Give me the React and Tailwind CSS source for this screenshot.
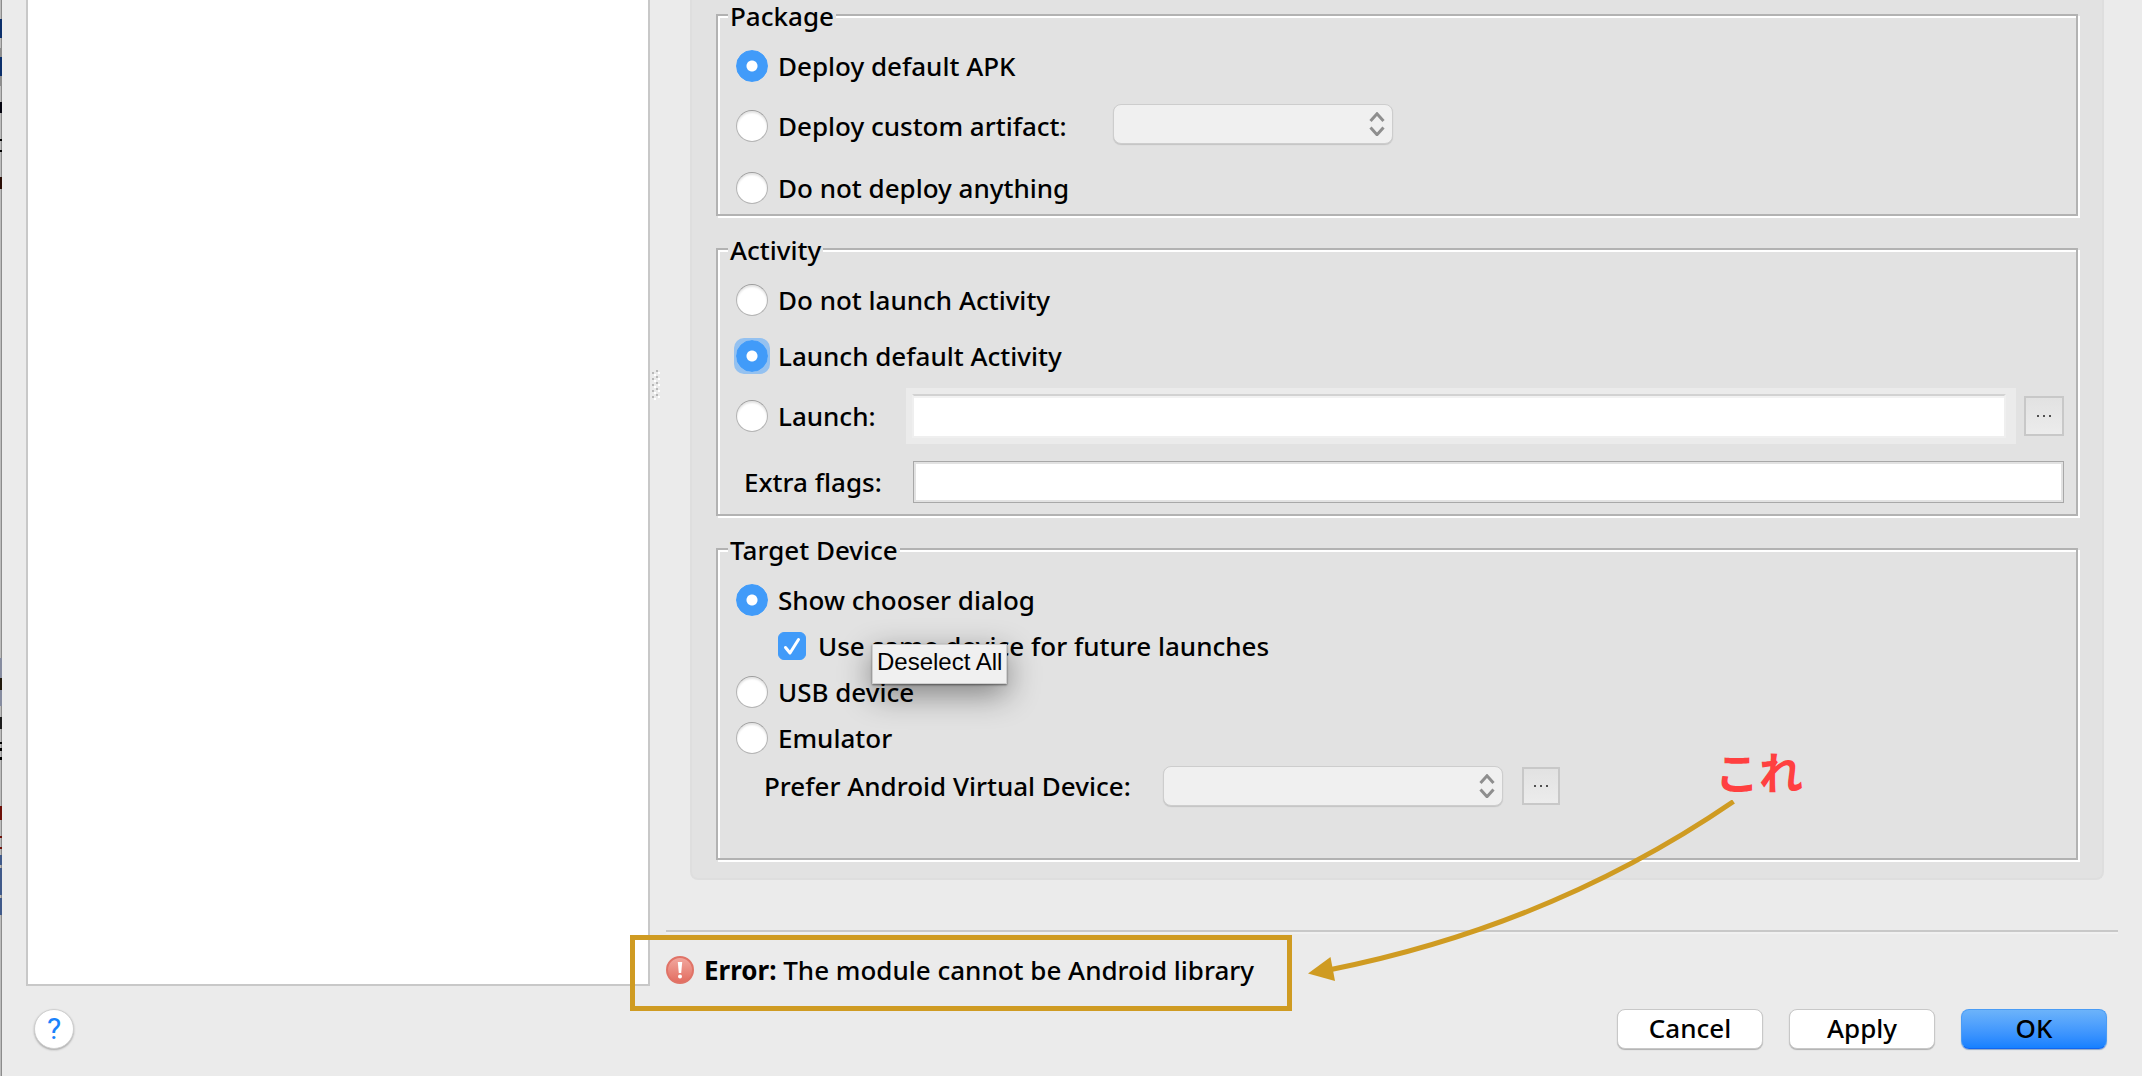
import { useState } from "react";

// slivers of the editor window that show behind the dialog
const editorSlivers = [
  { gap: 19, height: 19, color: "#0b2f6b" },
  { gap: 10, height: 9, color: "#8e8e8e" },
  { gap: 0, height: 19, color: "#0b2f6b" },
  { gap: 0, height: 10, color: "#8e8e8e" },
  { gap: 16, height: 11, color: "#050510" },
  { gap: 26, height: 2, color: "#000000" },
  { gap: 9, height: 2, color: "#000000" },
  { gap: 25, height: 12, color: "#2a0d05" },
  { gap: 469, height: 20, color: "#868ca0" },
  { gap: 0, height: 12, color: "#22190c" },
  { gap: 0, height: 16, color: "#868ca0" },
  { gap: 11, height: 12, color: "#1c1c1c" },
  { gap: 13, height: 2, color: "#000000" },
  { gap: 4, height: 3, color: "#000000" },
  { gap: 6, height: 3, color: "#000000" },
  { gap: 46, height: 14, color: "#6e1008" },
  { gap: 16, height: 2, color: "#6e1008" },
  { gap: 9, height: 2, color: "#6e1008" },
  { gap: 6, height: 10, color: "#405a8a" },
  { gap: 3, height: 27, color: "#405a8a" },
  { gap: 3, height: 17, color: "#405a8a" },
];

const EditorEdge = () => (
  <div className="flex w-0.5 shrink-0 flex-col bg-linear-to-r from-[#bcbcbc] from-50% to-[#8c8c8c] to-50%">
    {editorSlivers.map((s, i) => (
      <div
        key={i}
        style={{ marginTop: s.gap, height: s.height, background: s.color }}
      />
    ))}
  </div>
);

const Group = ({ title, children }) => (
  <fieldset className="border-2 border-[#b2b2b2] px-2.5 shadow-[2px_2px_0_#fff,inset_2px_2px_0_#fff]">
    <legend className="bg-[#e2e2e2] px-0.5 pt-0.5 leading-7">{title}</legend>
    {children}
  </fieldset>
);

const Radio = ({ name, value, selected, onSelect, focused, children }) => (
  <label className="flex h-8 items-center gap-2.5 whitespace-nowrap">
    <span
      className={
        focused ? "-m-0.5 rounded-[10px] bg-[#94c1f0] p-0.5" : "rounded-full"
      }
    >
      <input
        type="radio"
        name={name}
        value={value}
        checked={selected === value}
        onChange={() => onSelect(value)}
        className="block h-8 w-8 shrink-0 appearance-none rounded-full border border-[#b4b4b4] border-t-[#9c9c9c] bg-white shadow-[inset_0_2px_2px_#e4e4e4] outline-none checked:border-[#419bf9] checked:bg-[radial-gradient(circle,#fff_5px,#419bf9_6px)] checked:shadow-none"
      />
    </span>
    {children}
  </label>
);

const Combo = ({ label, className }) => (
  <div className={`relative h-10 ${className}`}>
    <select
      aria-label={label}
      disabled
      className="h-10 w-full appearance-none rounded-lg border border-[#cdcdcd] bg-[#f0f0f0] shadow-[0_1px_1px_#c4c4c4]"
    />
    <svg
      className="pointer-events-none absolute top-2 right-2 h-6 w-4"
      viewBox="0 0 16 24"
      fill="none"
      stroke="#8e8e8e"
      strokeWidth="3"
    >
      <path d="M1.5 9 8 1.8 14.5 9M1.5 15.5 8 22.7l6.5-7.2" />
    </svg>
  </div>
);

const MoreButton = ({ label, className }) => (
  <button
    type="button"
    aria-label={label}
    className={`flex shrink-0 items-center justify-center gap-1 border-2 border-[#c8c8c8] bg-linear-to-b from-[#e2e2e2] to-[#ececec] ${className}`}
  >
    <span className="h-0.5 w-0.5 bg-[#505050]" />
    <span className="h-0.5 w-0.5 bg-[#505050]" />
    <span className="h-0.5 w-0.5 bg-[#505050]" />
  </button>
);

const App = () => {
  const [deploy, setDeploy] = useState("default");
  const [activity, setActivity] = useState("default");
  const [target, setTarget] = useState("chooser");
  const [sameDevice, setSameDevice] = useState(true);

  return (
    <div className="flex min-h-screen overflow-hidden bg-[#ebebeb] font-['Noto_Sans','Open_Sans',sans-serif] text-[26px] font-medium text-black">
      <EditorEdge />

      <div className="flex min-w-0 flex-1 flex-col">
        <div className="flex flex-1 pl-6">
          {/* Configuration tree */}
          <div className="w-[624px] shrink-0 border-2 border-t-0 border-[#c8c8c8] bg-white" />

          {/* Splitter grip */}
          <div className="w-4 shrink-0 pt-[368px] pl-0.5">
            <svg className="h-8 w-2" viewBox="0 0 8 32">
              {[0, 6, 12, 18, 24].map((y) => (
                <g key={y}>
                  <path d={`M4 ${y + 2}h2v2h-2zM0 ${y + 4}h2v2h-2z`} fill="#b8b8b8" />
                  <path d={`M6 ${y + 4}h2v2h-2zM2 ${y + 6}h2v2h-2z`} fill="#fff" />
                </g>
              ))}
            </svg>
          </div>

          <main className="flex min-w-0 flex-1 flex-col">
            <div className="mr-[38px] ml-6 flex flex-col gap-[18px] rounded-b-lg border-2 border-t-0 border-[#dedede] bg-[#e2e2e2] px-6 pb-[18px]">
              <Group title="Package">
                <div className="px-2 pt-5 pb-2.5">
                  <Radio name="deploy" value="default" selected={deploy} onSelect={setDeploy}>
                    Deploy default APK
                  </Radio>
                  <div className="mt-[22px] mb-7 flex h-10 items-center">
                    <div className="w-[377px] pt-1">
                      <Radio name="deploy" value="custom" selected={deploy} onSelect={setDeploy}>
                        Deploy custom artifact:
                      </Radio>
                    </div>
                    <Combo label="Custom artifact" className="w-[280px]" />
                  </div>
                  <Radio name="deploy" value="nothing" selected={deploy} onSelect={setDeploy}>
                    Do not deploy anything
                  </Radio>
                </div>
              </Group>

              <Group title="Activity">
                <div className="pt-5 pr-0.5 pb-[11px] pl-2">
                  <Radio name="activity" value="none" selected={activity} onSelect={setActivity}>
                    Do not launch Activity
                  </Radio>
                  <div className="mt-6 mb-4">
                    <Radio
                      name="activity"
                      value="default"
                      selected={activity}
                      onSelect={setActivity}
                      focused
                    >
                      Launch default Activity
                    </Radio>
                  </div>
                  <div className="flex items-center gap-2">
                    <div className="w-[162px]">
                      <Radio name="activity" value="custom" selected={activity} onSelect={setActivity}>
                        Launch:
                      </Radio>
                    </div>
                    <div className="flex flex-1 bg-[#ebebeb] py-1.5 pr-2.5 pl-1.5">
                      <input
                        type="text"
                        aria-label="Activity to launch"
                        className="h-11 w-full border-2 border-[#efefef] border-t-[#d2d2d2] bg-white px-2 shadow-[inset_0_2px_0_#f2f2f2] outline-none"
                      />
                    </div>
                    <MoreButton label="Choose activity" className="h-10 w-10" />
                  </div>
                  <div className="mt-[17px] flex items-center">
                    <label htmlFor="flags" className="w-[177px] pl-2">
                      Extra flags:
                    </label>
                    <input
                      id="flags"
                      type="text"
                      className="h-[42px] min-w-0 flex-1 border border-[#a8a8a8] bg-white px-2 shadow-[inset_0_0_0_2px_#e2e2e2] outline-none"
                    />
                  </div>
                </div>
              </Group>

              <Group title="Target Device">
                <div className="px-2 pt-5 pb-[52px]">
                  <Radio name="target" value="chooser" selected={target} onSelect={setTarget}>
                    Show chooser dialog
                  </Radio>
                  <div className="relative mt-4 mb-4 ml-[42px] w-fit">
                    <label className="flex h-7 items-center gap-3 whitespace-nowrap">
                      <span className="grid h-7 w-7 shrink-0">
                        <input
                          type="checkbox"
                          checked={sameDevice}
                          onChange={(e) => setSameDevice(e.target.checked)}
                          className="col-start-1 row-start-1 h-7 w-7 appearance-none rounded-md border border-[#b4b4b4] bg-white checked:border-[#419bf9] checked:bg-[#419bf9]"
                        />
                        {sameDevice && (
                          <svg
                            className="pointer-events-none col-start-1 row-start-1 h-7 w-7"
                            viewBox="0 0 28 28"
                            fill="none"
                            stroke="#fff"
                            strokeWidth="3"
                            strokeLinecap="round"
                            strokeLinejoin="round"
                          >
                            <path d="M7.5 15.5l4.5 5.5L20.5 7.5" />
                          </svg>
                        )}
                      </span>
                      Use same device for future launches
                    </label>
                    <div
                      role="tooltip"
                      className="absolute top-3 left-[94px] h-10 border border-[#d0d0d0] bg-[#f0f0f0] px-1 font-['Liberation_Sans',sans-serif] text-2xl leading-[34px] font-normal whitespace-nowrap shadow-[0_1px_2px_#00000080,0_10px_32px_#00000070]"
                    >
                      Deselect All
                    </div>
                  </div>
                  <div className="flex flex-col gap-3.5">
                    <Radio name="target" value="usb" selected={target} onSelect={setTarget}>
                      USB device
                    </Radio>
                    <Radio name="target" value="emulator" selected={target} onSelect={setTarget}>
                      Emulator
                    </Radio>
                  </div>
                  <div className="mt-3 flex h-10 items-center">
                    <div className="w-[427px] pl-7 whitespace-nowrap">
                      Prefer Android Virtual Device:
                    </div>
                    <Combo label="Prefer Android Virtual Device" className="mr-[19px] w-[340px]" />
                    <MoreButton label="Choose virtual device" className="h-[38px] w-[38px]" />
                  </div>
                </div>
              </Group>
            </div>

            {/* Validation message */}
            <div className="relative mt-[50px] mr-6 border-t-2 border-[#c8c8c8] shadow-[inset_0_2px_0_#f0f0f0]">
              <p className="flex items-center gap-2.5 pt-6 pb-0.5 leading-7 whitespace-nowrap">
                <svg className="h-7 w-7 shrink-0" viewBox="0 0 28 28">
                  <defs>
                    <linearGradient id="err" x1="0" y1="0" x2="0" y2="1">
                      <stop offset="0" stopColor="#f2a9a0" />
                      <stop offset="1" stopColor="#e26b5e" />
                    </linearGradient>
                  </defs>
                  <circle cx="14" cy="14" r="13" fill="url(#err)" stroke="#e07367" strokeWidth="2" />
                  <path d="M11.8 6h4.4l-1 11h-2.4z" fill="#fff" />
                  <circle cx="14" cy="20.5" r="2" fill="#fff" />
                </svg>
                <span>
                  <b>Error:</b> The module cannot be Android library
                </span>
              </p>

              {/* Annotation: frame, arrow and note */}
              <div className="pointer-events-none absolute top-[3px] -left-9 h-[76px] w-[662px] border-[5px] border-[#cf9b22]" />
              <svg
                className="pointer-events-none absolute -top-[132px] left-[634px] h-[188px] w-[440px]"
                viewBox="1300 800 440 188"
              >
                <path d="M1733.5 801.5Q1553 925 1331 969.5" fill="none" stroke="#cf9b22" strokeWidth="5" />
                <path d="M1308 973.5l22.5-16.500 4.500 24z" fill="#cf9b22" />
              </svg>
              <div className="pointer-events-none absolute -top-[191px] left-[1049px] font-['Noto_Sans_CJK_JP',sans-serif] text-[44px] leading-[60px] font-bold text-[#ff4040]">
                これ
              </div>
            </div>
          </main>
        </div>

        {/* Dialog buttons */}
        <div className="flex items-center gap-[26px] pt-[23px] pr-[35px] pb-[27px] pl-8">
          <button
            type="button"
            aria-label="Help"
            className="mr-auto h-10 w-10 rounded-full border border-[#cfcfcf] bg-white font-['Roboto',sans-serif] text-[30px] leading-9 font-normal text-[#1a82fb] shadow-[0_1px_2px_#a8a8a8]"
          >
            ?
          </button>
          <button
            type="button"
            className="h-10 w-[146px] rounded-lg border border-[#c8c8c8] bg-white pb-0.5 leading-9 shadow-[0_1px_1px_#b0b0b0]"
          >
            Cancel
          </button>
          <button
            type="button"
            className="h-10 w-[146px] rounded-lg border border-[#c8c8c8] bg-white pb-0.5 leading-9 shadow-[0_1px_1px_#b0b0b0]"
          >
            Apply
          </button>
          <button
            type="button"
            className="h-10 w-[146px] rounded-lg border border-[#4a9cf5] border-b-[#1266f0] bg-linear-to-b from-[#6cb3fa] to-[#1580ff] pb-0.5 leading-9 shadow-[0_1px_1px_#8fa8c8]"
          >
            OK
          </button>
        </div>
      </div>
    </div>
  );
};

export default App;
